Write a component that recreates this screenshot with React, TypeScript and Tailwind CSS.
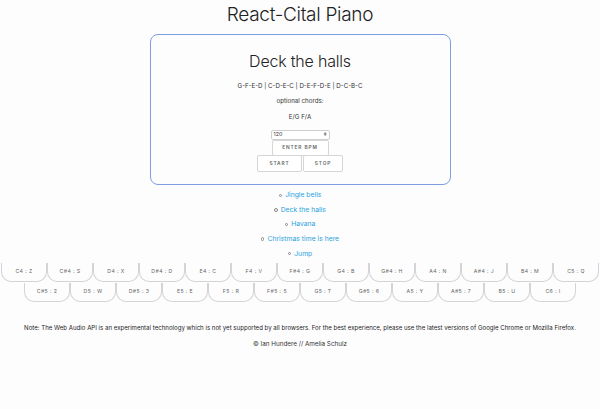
import React from "react";

const songs = [
  "Jingle bells",
  "Deck the halls",
  "Havana",
  "Christmas time is here",
  "Jump",
];

const row1 = [
  "C4 : Z",
  "C#4 : S",
  "D4 : X",
  "D#4 : D",
  "E4 : C",
  "F4 : V",
  "F#4 : G",
  "G4 : B",
  "G#4 : H",
  "A4 : N",
  "A#4 : J",
  "B4 : M",
  "C5 : Q",
];

const row2 = [
  "C#5 : 2",
  "D5 : W",
  "D#5 : 3",
  "E5 : E",
  "F5 : R",
  "F#5 : 5",
  "G5 : T",
  "G#5 : 6",
  "A5 : Y",
  "A#5 : 7",
  "B5 : U",
  "C6 : I",
];

function Key({ label }: { label: string }) {
  return (
    <div className="flex h-[19px] w-[46px] shrink-0 items-center justify-center rounded-b-[10px] border-x border-b border-[#d4d4d8] text-[5.2px] tracking-[0.4px] text-[#666]">
      {label}
    </div>
  );
}

function SmallButton({
  children,
  className,
}: {
  children: React.ReactNode;
  className: string;
}) {
  return (
    <button
      className={`flex items-center justify-center rounded-[2px] border border-[#d6d6d6] bg-white text-[4.8px] font-semibold uppercase tracking-[0.9px] text-[#666] ${className}`}
    >
      {children}
    </button>
  );
}

export default function App() {
  return (
    <div
      className="h-[409px] w-[600px] overflow-hidden bg-[#fdfdfe] text-center text-[#333]"
      style={{ fontFamily: "Inter, 'Noto Sans', sans-serif" }}
    >
      <h1 className="pt-[2px] text-[19px] font-light leading-[25px] tracking-[-0.3px] text-[#222]">
        React-Cital Piano
      </h1>

      <div className="mx-auto mt-[7px] flex h-[151px] w-[301px] flex-col items-center rounded-[8px] border border-[#7d9fe2]">
        <h2 className="mt-[14px] text-[16px] font-light leading-[24px] tracking-[-0.2px] text-[#222]">
          Deck the halls
        </h2>
        <p className="mt-[8px] text-[6.2px] leading-[9px]">
          G-F-E-D | C-D-E-C | D-E-F-D-E | D-C-B-C
        </p>
        <p className="mt-[6px] text-[6.2px] leading-[9px]">optional chords:</p>
        <p className="mt-[7px] text-[6.2px] leading-[9px]">E/G F/A</p>

        <div className="mt-[9px] flex h-[10px] w-[59px] items-center justify-between rounded-[2px] border border-[#cfcfcf] bg-white px-[2px] text-[5.3px]">
          <span>120</span>
          <span className="flex flex-col text-[2.8px] leading-[3px] text-[#888]">
            <span>▲</span>
            <span>▼</span>
          </span>
        </div>
        <SmallButton className="h-[16px] w-[57px]">Enter BPM</SmallButton>
        <div className="-mt-[1px] flex">
          <SmallButton className="h-[17px] w-[45px]">Start</SmallButton>
          <SmallButton className="ml-[1px] h-[17px] w-[40px]">Stop</SmallButton>
        </div>
      </div>

      <ul className="mt-[3px] flex flex-col items-center">
        {songs.map((song) => (
          <li
            key={song}
            className="flex h-[14.6px] items-center text-[6.8px] text-[#2ba3dd]"
          >
            <span className="mr-[3px] h-[3.5px] w-[3.5px] rounded-full border border-[#888]" />
            {song}
          </li>
        ))}
      </ul>

      <div className="mt-[2px] flex justify-center">
        {row1.map((k) => (
          <Key key={k} label={k} />
        ))}
      </div>
      <div className="mt-[1px] flex justify-center">
        {row2.map((k) => (
          <Key key={k} label={k} />
        ))}
      </div>

      <p className="mt-[21px] whitespace-nowrap text-[6.1px] leading-[9px] text-[#222]">
        Note: The Web Audio API is an experimental technology which is not yet
        supported by all browsers. For the best experience, please use the
        latest versions of Google Chrome or Mozilla Firefox.
      </p>
      <p className="mt-[8px] text-[6.3px] leading-[9px] text-[#333]">
        © Ian Hundere // Amelia Schulz
      </p>
    </div>
  );
}
